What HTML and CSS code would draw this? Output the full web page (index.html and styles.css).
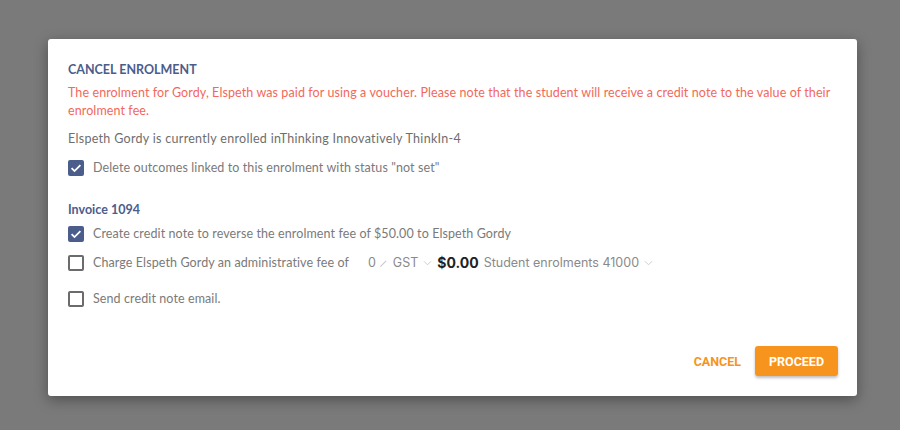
FILE: index.html
```html
<!DOCTYPE html>
<html>
<head>
<meta charset="utf-8">
<link rel="stylesheet" href="styles.css">
</head>
<body>
<div class="backdrop">
  <div class="dialog">
    <div class="content">
      <h2 class="title">CANCEL ENROLMENT</h2>
      <p class="warning">The enrolment for Gordy, Elspeth was paid for using a voucher. Please note that the student will receive a credit note to the value of their enrolment fee.</p>
      <p class="info">Elspeth Gordy is currently enrolled inThinking Innovatively ThinkIn-4</p>
      <label class="row">
        <span class="box checked"><svg viewBox="0 0 16 16" width="16" height="16"><path d="M3.6 8.2l2.9 2.9 5.9-5.9" fill="none" stroke="#fff" stroke-width="1.8"/></svg></span>
        <span>Delete outcomes linked to this enrolment with status "not set"</span>
      </label>

      <h3 class="invoice">Invoice 1094</h3>
      <label class="row">
        <span class="box checked"><svg viewBox="0 0 16 16" width="16" height="16"><path d="M3.6 8.2l2.9 2.9 5.9-5.9" fill="none" stroke="#fff" stroke-width="1.8"/></svg></span>
        <span>Create credit note to reverse the enrolment fee of $50.00 to Elspeth Gordy</span>
      </label>
      <div class="row fee-row">
        <span class="box"></span>
        <span>Charge Elspeth Gordy an administrative fee of</span>
        <span class="fee">
          <span class="field">0<svg class="pencil" viewBox="0 0 10 10" width="9" height="9"><path d="M1.5 8.5L8 2" stroke="#c8c8c8" stroke-width="1.2" fill="none"/></svg></span>
          <span class="field">GST<svg class="chev" viewBox="0 0 10 6" width="9" height="6"><path d="M1 1l4 4 4-4" stroke="#c8c8c8" stroke-width="1" fill="none"/></svg></span>
          <span class="amount">$0.00</span>
          <span class="field">Student enrolments 41000<svg class="chev" viewBox="0 0 10 6" width="9" height="6"><path d="M1 1l4 4 4-4" stroke="#c8c8c8" stroke-width="1" fill="none"/></svg></span>
        </span>
      </div>
      <label class="row email-row">
        <span class="box"></span>
        <span>Send credit note email.</span>
      </label>
    </div>
    <div class="actions">
      <button class="btn-text">CANCEL</button>
      <button class="btn-primary">PROCEED</button>
    </div>
  </div>
</div>
</body>
</html>
```
FILE: styles.css
```css
html, body {
  margin: 0;
  padding: 0;
}
body {
  background: #7a7a7a;
  font-family: "Lato", "Open Sans", sans-serif;
  width: 900px;
  height: 430px;
  overflow: hidden;
}
.backdrop {
  padding: 39px 43px 0 48px;
}
.dialog {
  width: 809px;
  height: 357px;
  background: #fff;
  border-radius: 3px;
  box-shadow: 0 4px 14px rgba(0,0,0,0.35);
  display: flex;
  flex-direction: column;
  box-sizing: border-box;
}
.content {
  padding: 24px 20px 0 20px;
  flex: 1;
  letter-spacing: 0.1px;
}
.title {
  margin: 0;
  font-size: 12.5px;
  font-weight: 700;
  color: #4b5d8a;
  line-height: 14px;
  letter-spacing: 0;
}
.warning {
  margin: 7px 0 0 0;
  font-size: 12.5px;
  line-height: 18px;
  color: #f2685c;
}
.info {
  margin: 11px 0 0 0;
  font-size: 12.5px;
  line-height: 16px;
  color: #6e6e6e;
  letter-spacing: 0.3px;
}
.row {
  display: flex;
  align-items: center;
  gap: 9px;
  font-size: 12.5px;
  color: #7a7a7a;
  line-height: 16px;
  margin-top: 13px;
}
.box {
  width: 16px;
  height: 16px;
  box-sizing: border-box;
  border: 2px solid #6b6b6b;
  border-radius: 2px;
  flex: none;
  display: flex;
  align-items: center;
  justify-content: center;
}
.box.checked {
  background: #4b5d8a;
  border: none;
}
.invoice {
  margin: 27px 0 0 0;
  font-size: 12.5px;
  font-weight: 700;
  color: #4b5d8a;
  line-height: 14px;
  letter-spacing: 0;
}
.invoice + .row {
  margin-top: 9px;
}
.fee-row {
  margin-top: 13px;
}
.fee {
  display: flex;
  align-items: center;
  gap: 5px;
  margin-left: 10px;
  font-family: "Inter", "Roboto", sans-serif;
  font-size: 12.5px;
  color: #8a8a8a;
  letter-spacing: 0;
}
.field {
  display: flex;
  align-items: center;
  gap: 3px;
}
.pencil {
  margin-top: 1px;
}
.chev {
  margin-left: 2px;
}
.amount {
  font-size: 14px;
  font-weight: 700;
  color: #222;
}
.email-row {
  margin-top: 20px;
}
.actions {
  display: flex;
  justify-content: flex-end;
  align-items: center;
  gap: 14px;
  padding: 0 19px 20px 0;
}
.btn-text {
  background: none;
  border: none;
  color: #f7941d;
  font-family: "Roboto", sans-serif;
  font-weight: 700;
  font-size: 12.5px;
  padding: 0;
  cursor: pointer;
}
.btn-primary {
  background: #f7941d;
  color: #fff;
  border: none;
  border-radius: 3px;
  font-family: "Roboto", sans-serif;
  font-weight: 700;
  font-size: 12.5px;
  width: 83px;
  height: 30px;
  box-shadow: 0 2px 3px rgba(0,0,0,0.25);
  cursor: pointer;
}
```
